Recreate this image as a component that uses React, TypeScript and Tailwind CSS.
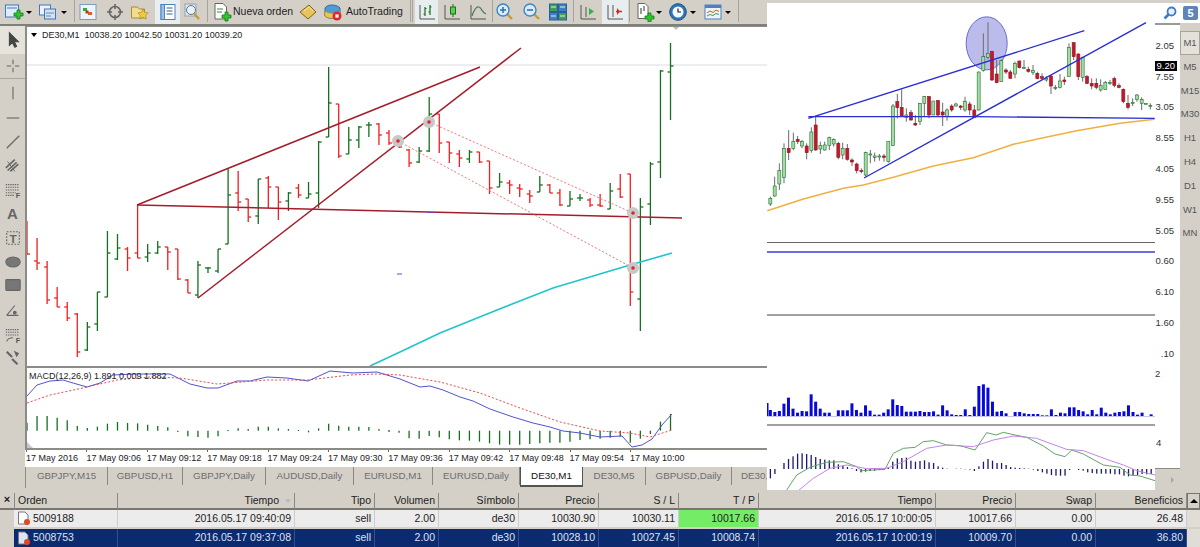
import React from 'react';

// main chart bars in page px: [high, low, open, close]
const bars: number[][] = [
  [221, 255, 221, 254], [238, 270, 261, 263], [261, 304, 267, 300], [287, 307, 298, 307], [302, 321, 307, 318],
  [313, 357, 314, 352], [322, 351, 350, 327], [292, 331, 324, 292], [231, 297, 297, 253], [234, 260, 259, 248],
  [247, 271, 249, 258], [205, 258, 253, 258], [244, 262, 257, 253], [241, 254, 253, 247], [247, 270, 247, 252],
  [249, 280, 249, 279], [279, 293, 280, 293], [261, 298, 295, 265], [267, 273, 268, 268], [249, 273, 271, 249],
  [169, 244, 244, 195], [171, 211, 193, 202], [199, 222, 199, 217], [179, 224, 216, 179], [176, 208, 178, 187],
  [187, 220, 187, 202], [192, 211, 201, 193], [184, 198, 188, 195], [182, 198, 198, 194], [141, 208, 193, 142],
  [67, 137, 137, 103], [104, 158, 104, 156], [127, 154, 154, 140], [126, 148, 140, 127], [122, 137, 125, 125],
  [123, 145, 124, 135], [130, 145, 133, 143], [140, 148, 141, 147], [149, 167, 150, 163], [147, 163, 162, 151],
  [97, 152, 151, 114], [114, 153, 114, 143], [142, 163, 142, 153], [150, 167, 154, 158], [150, 163, 159, 152],
  [152, 163, 152, 162], [161, 194, 161, 188], [173, 187, 187, 182], [180, 194, 183, 185], [184, 197, 188, 189],
  [190, 203, 194, 196], [176, 192, 192, 185], [184, 193, 185, 193], [189, 206, 193, 205], [191, 206, 206, 199],
  [194, 201, 198, 198], [198, 207, 200, 205], [194, 207, 205, 206], [183, 209, 209, 191], [174, 198, 189, 197],
  [174, 306, 174, 292], [198, 331, 299, 207], [162, 225, 204, 164], [70, 178, 162, 71], [43, 120, 72, 66],
];

const macd = '27,396 37,385 50,381 63,380 73,383 87,387 100,383 113,375 133,374 157,374 170,374 190,384 207,388 218,388 237,381 250,381 267,377 287,378 308,381 330,371 353,373 377,372 400,379 420,387 430,386 443,390 460,397 473,401 490,409 513,417 533,423 550,427 563,431 580,433 600,437 622,436 632,447 642,445 652,439 662,425 672,414';
const signal = '27,403 50,395 83,388 117,380 150,377 180,378 217,384 267,380 308,380 350,375 377,374 400,375 440,382 480,393 520,408 560,422 600,431 630,433 650,437 672,430';
// histogram as offset from the zero line, in 3x crop px (top, bottom)
const hist: number[][] = [
  [188, 212], [168, 212], [168, 212], [173, 212], [181, 212], [198, 212], [204, 212], [200, 212], [191, 212], [186, 212],
  [189, 212], [190, 212], [194, 212], [198, 212], [202, 212], [212, 216], [212, 229], [212, 231], [212, 233], [212, 229],
  [210, 213], [205, 212], [207, 212], [200, 212], [200, 212], [205, 212], [207, 212], [210, 213], [212, 217], [205, 212],
  [191, 212], [197, 212], [200, 212], [200, 212], [201, 212], [207, 212], [210, 216], [212, 218], [212, 235], [212, 236],
  [212, 228], [212, 232], [212, 238], [212, 241], [212, 242], [212, 245], [212, 250], [212, 254], [212, 254], [212, 254],
  [212, 252], [212, 250], [212, 248], [212, 248], [212, 245], [212, 240], [212, 238], [212, 236], [212, 233], [212, 230],
  [212, 248], [212, 236], [212, 222], [185, 212], [162, 212],
];

// right hand chart, 3x crop px: [x, high, low, bodyTop, bodyBottom, up]
const candles: [number, number, number, number, number, number][] = [
  [31, 590, 618, 595, 612, 1], [44, 530, 590, 558, 588, 1], [58, 490, 570, 512, 552, 1], [72, 430, 550, 445, 532, 1],
  [86, 390, 480, 445, 458, 0], [100, 398, 450, 425, 445, 1], [113, 408, 432, 418, 425, 0], [126, 420, 445, 425, 438, 1],
  [140, 430, 478, 438, 458, 0], [154, 382, 458, 396, 452, 1], [167, 350, 452, 375, 450, 0], [181, 425, 462, 437, 447, 1],
  [194, 425, 452, 435, 450, 1], [208, 410, 450, 412, 437, 1], [221, 415, 440, 418, 432, 1], [235, 425, 478, 430, 472, 0],
  [248, 428, 478, 445, 465, 1], [262, 432, 482, 445, 478, 0], [276, 475, 498, 480, 486, 0], [290, 488, 520, 492, 512, 0],
  [304, 505, 520, 512, 515, 0], [317, 455, 530, 458, 525, 1], [331, 450, 490, 462, 465, 1], [344, 458, 485, 468, 472, 1],
  [358, 462, 482, 468, 470, 1], [372, 462, 485, 468, 472, 0], [385, 425, 488, 425, 485, 1], [399, 312, 438, 318, 436, 1],
  [412, 282, 355, 305, 323, 0], [425, 268, 350, 322, 350, 0], [439, 325, 365, 345, 352, 1], [453, 330, 362, 338, 360, 0],
  [466, 345, 378, 370, 375, 0], [480, 310, 375, 310, 365, 1], [493, 288, 350, 290, 310, 1], [507, 288, 355, 290, 345, 0],
  [520, 303, 345, 303, 345, 1], [534, 300, 350, 302, 345, 0], [548, 308, 378, 336, 345, 0], [561, 325, 362, 330, 350, 1],
  [575, 313, 335, 318, 330, 0], [588, 308, 320, 312, 318, 1], [602, 315, 330, 318, 322, 0], [615, 290, 335, 305, 330, 1],
  [629, 305, 345, 312, 330, 0], [643, 315, 352, 330, 352, 0], [656, 215, 332, 216, 330, 1], [670, 100, 215, 170, 212, 1],
  [684, 67, 178, 160, 172, 1], [696, 152, 243, 155, 240, 0], [710, 180, 250, 222, 248, 0], [724, 178, 245, 182, 245, 1],
  [738, 205, 222, 210, 216, 0], [751, 210, 235, 216, 235, 0], [765, 185, 235, 190, 222, 1], [778, 182, 205, 183, 203, 0],
  [792, 180, 205, 203, 204, 1], [805, 200, 218, 208, 214, 0], [819, 195, 225, 212, 218, 1], [832, 215, 238, 220, 236, 0],
  [846, 220, 240, 230, 235, 0], [859, 228, 245, 235, 240, 1], [873, 225, 282, 228, 258, 0], [886, 255, 270, 262, 265, 1],
  [900, 222, 265, 243, 262, 1], [913, 230, 255, 240, 245, 0], [927, 130, 230, 142, 230, 1], [941, 127, 180, 128, 170, 0],
  [955, 160, 240, 162, 230, 0], [968, 170, 245, 172, 232, 1], [981, 225, 252, 230, 250, 0], [995, 235, 268, 250, 258, 0],
  [1009, 235, 268, 250, 262, 0], [1022, 238, 275, 256, 270, 1], [1036, 243, 270, 248, 268, 1], [1050, 240, 255, 248, 250, 1],
  [1063, 230, 262, 236, 256, 0], [1077, 250, 265, 257, 262, 0], [1090, 265, 310, 268, 305, 0], [1104, 285, 328, 310, 322, 0],
  [1118, 295, 318, 308, 311, 1], [1131, 282, 305, 285, 298, 1], [1145, 292, 330, 298, 310, 1], [1158, 310, 312, 310, 312, 1],
  [1171, 310, 328, 316, 318, 1],
];
const volumes = [18, 12, 15, 37, 55, 22, 10, 15, 14, 65, 43, 22, 10, 10, 0, 17, 17, 17, 38, 18, 10, 32, 16, 4, 4, 10, 20, 50, 33, 30, 13, 13, 13, 15, 12, 12, 14, 4, 32, 17, 5, 3, 3, 20, 3, 28, 90, 95, 85, 43, 13, 15, 8, 0, 12, 12, 8, 6, 6, 6, 2, 2, 20, 3, 10, 8, 26, 26, 18, 14, 5, 18, 5, 25, 10, 5, 10, 12, 14, 32, 12, 4, 10, 0, 5];
const macdRight = [-28, -15, 0, 18, 30, 38, 46, 47, 45, 42, 36, 30, 28, 26, 26, 14, 10, 6, 2, -6, -10, -8, -6, -5, -3, -2, 5, 22, 32, 33, 34, 25, 22, 24, 26, 20, 18, 8, 4, 1, 0, 1, 1, -1, -2, -6, 8, 22, 30, 25, 18, 18, 12, 6, 4, 3, 2, 1, -2, -6, -10, -14, -18, -20, -20, -20, -3, 0, -3, -5, -10, -12, -14, -14, -14, -14, -16, -16, -20, -22, -20, -18, -15, -16, -15];

const RX = (z: number) => 760 + z / 3;
const RY = (z: number) => z / 3;
// lower half of the right chart was read from a crop that starts at y=230
const LY = (z: number) => 230 + z / 3;
const crop = (s: string, fy: (z: number) => number = RY) =>
  s.split(' ').map((p) => { const [x, y] = p.split(',').map(Number); return `${RX(x)},${fy(y)}`; }).join(' ');

const TABS = [
  ['GBPJPY,M15', 'w-[82px]'], ['GBPUSD,H1', 'w-[75px]'], ['GBPJPY,Daily', 'w-[83px]'], ['AUDUSD,Daily', 'w-[88px]'],
  ['EURUSD,M1', 'w-[79px]'], ['EURUSD,Daily', 'w-[87px]'],
];
const TABS2 = [['DE30,M5', 'w-[63px]'], ['GBPUSD,Daily', 'w-[86px]']];
const TIMES = ['17 May 2016', '17 May 09:06', '17 May 09:12', '17 May 09:18', '17 May 09:24', '17 May 09:30', '17 May 09:36', '17 May 09:42', '17 May 09:48', '17 May 09:54', '17 May 10:00'];
const PRICES = ['2.05', '7.55', '3.05', '8.55', '4.05', '9.55', '5.05', '0.60', '6.10', '1.60', '.10'];
const FRAMES = ['M1', 'M5', 'M15', 'M30', 'H1', 'H4', 'D1', 'W1', 'MN'];

const GRID = 'grid grid-cols-[14px_104px_177px_80px_64px_80px_80px_80px_80px_177px_80px_80px_91px_13px]';

const Caret = ({ className }: { className: string }) => (
  <div className={`flex h-[24px] items-center justify-center ${className}`}>
    <span className="border-x-[3px] border-t-[3px] border-x-transparent border-t-black" />
  </div>
);
const Sep = ({ className }: { className: string }) => <div className={`h-[22px] w-px bg-[#a8a49a] ${className}`} />;
const Btn = ({ className, children }: { className: string; children: React.ReactNode }) => (
  <div className={`flex h-[24px] items-center justify-center ${className}`}>
    <svg viewBox="0 0 20 20" className="h-[20px] w-[20px]">{children}</svg>
  </div>
);
const Plus = ({ x = 0, y = 0 }: { x?: number; y?: number }) => (
  <path transform={`translate(${x} ${y})`} d="M11 10h3V7h3v3h3v3h-3v3h-3v-3h-3z" fill="#2fc52f" stroke="#137a13" strokeWidth="0.8" />
);
const Tool = ({ className, children }: { className: string; children: React.ReactNode }) => (
  <div className={`flex w-[25px] items-center justify-center ${className}`}>
    <svg viewBox="0 0 20 20" className="h-[18px] w-[18px]" fill="none" stroke="#666" strokeWidth="1.2">{children}</svg>
  </div>
);

function Toolbar() {
  return (
    <div className="flex h-[26px] shrink-0 items-start border-b-2 border-[#80807a]">
      <Btn className="ml-[3px] w-[21px]">
        <rect x="1.5" y="3" width="13" height="12" fill="#dfeeff" stroke="#3f78bd" />
        <path d="M3 6h10" stroke="#3f78bd" />
        <Plus x="-1" y="1" />
      </Btn>
      <Caret className="w-[10px]" />
      <Btn className="ml-[4px] w-[20px]">
        <rect x="1.5" y="3" width="11" height="10" fill="#eaf3ff" stroke="#3f78bd" />
        <rect x="6.5" y="7" width="11" height="10" fill="#cfe2fa" stroke="#3f78bd" />
        <path d="M8 11h8M8 14h5" stroke="#888" />
      </Btn>
      <Caret className="w-[12px]" />
      <Sep className="ml-[4px]" />
      <Btn className="ml-[3px] w-[20px]">
        <rect x="2" y="2.5" width="16" height="15" fill="#eef4fb" stroke="#7b9cc2" />
        <rect x="5" y="6" width="4" height="3" fill="#36a64a" />
        <rect x="10" y="10" width="4" height="3" fill="#d9622b" />
        <rect x="7.5" y="8.5" width="3" height="3" fill="#b7382a" />
      </Btn>
      <Btn className="ml-[7px] w-[20px]">
        <circle cx="10" cy="10" r="5.5" fill="none" stroke="#666" strokeWidth="1.6" />
        <path d="M10 2v5M10 13v5M2 10h5M13 10h5" stroke="#666" strokeWidth="1.6" />
      </Btn>
      <Btn className="ml-[5px] w-[20px]">
        <path d="M1.5 5h6l2 2h5v9h-13z" fill="#f2dc8e" stroke="#a68a34" />
        <path d="M13 7l1.7 3.4 3.6.5-2.6 2.5.6 3.6-3.3-1.7-3.2 1.7.6-3.6-2.6-2.5 3.6-.5z" fill="#f3c93f" stroke="#a68a34" strokeWidth="0.7" />
      </Btn>
      <div className="ml-[5px] h-[24px] w-[25px] bg-[#e8eef0]">
        <Btn className="w-[25px]">
          <rect x="3" y="2.5" width="14" height="15" fill="#fff" stroke="#4c82bf" />
          <rect x="3" y="2.5" width="3.5" height="15" fill="#9cc1e8" stroke="#4c82bf" />
          <path d="M8.5 6h6M8.5 9h6M8.5 12h6" stroke="#3c5a80" />
        </Btn>
      </div>
      <Btn className="ml-[2px] w-[20px]">
        <rect x="3" y="2" width="11" height="12" fill="#dfe7ef" stroke="#8fa3b8" />
        <circle cx="9" cy="8" r="4.5" fill="#eaf2fa" stroke="#5c7792" />
        <path d="M12 11.5l5 5.5" stroke="#c99a2e" strokeWidth="2.2" />
      </Btn>
      <Sep className="ml-[5px]" />
      <Btn className="ml-[4px] w-[20px]">
        <path d="M3 1.5h8l3.5 3.5v12h-11.500z" fill="#fff" stroke="#666" />
        <path d="M5 7h6M5 10h5" stroke="#4b7f4b" />
        <Plus x="-1" y="3" />
      </Btn>
      <span className="ml-px w-[60px] whitespace-nowrap pt-[3px] text-[10.500px] leading-[16px] text-[#222]">Nueva orden</span>
      <Btn className="ml-[5px] w-[20px]">
        <path d="M2 10L11 3l7 7-8 7z" fill="#e8c25a" stroke="#7a6420" />
        <path d="M6 9l5-4 4 4" fill="none" stroke="#f7e6a8" />
      </Btn>
      <Btn className="ml-[5px] w-[20px]">
        <path d="M2 6c2-4 12-4 15 0v8c-3 3-13 3-15 0z" fill="#4f9bd6" stroke="#356a9c" />
        <path d="M2 9c4 3 11 3 15 0v5c-3 3-13 3-15 0z" fill="#f0c648" stroke="#a8862a" strokeWidth="0.6" />
        <circle cx="14" cy="14" r="4.500" fill="#e3262b" />
        <rect x="12.400" y="12.400" width="3.200" height="3.200" fill="#fff" />
      </Btn>
      <span className="ml-[3px] w-[58px] whitespace-nowrap pt-[3px] text-[10.500px] leading-[16px] text-[#222]">AutoTrading</span>
      <div className="ml-[6px] h-[22px] w-[3px] border-x border-[#a8a49a]" />
      <div className="ml-[2px] h-[24px] w-[23px] bg-[#e8eef0]">
        <Btn className="w-[23px]">
          <path d="M3 3v14h15" fill="none" stroke="#555" />
          <path d="M8 5v9M6.500 12H8M8 6.500h1.500M13 3v10M11.500 10H13M13 5h1.500" stroke="#16701f" strokeWidth="1.2" fill="none" />
        </Btn>
      </div>
      <Btn className="ml-[4px] w-[20px]">
        <path d="M3 3v14h15" fill="none" stroke="#555" />
        <path d="M11 2v13" stroke="#16701f" />
        <rect x="8.500" y="5" width="5" height="7" fill="#56d24c" stroke="#16701f" />
      </Btn>
      <Btn className="ml-[6px] w-[20px]">
        <path d="M3 3v14h15" fill="none" stroke="#555" />
        <path d="M4 14c2-6 4-10 7-9 3 1 3 6 7 7" fill="none" stroke="#4a7f5a" strokeWidth="1.2" />
      </Btn>
      <Sep className="ml-[4px]" />
      <Btn className="ml-[2px] w-[20px]">
        <path d="M12 12l5 5" stroke="#c99a2e" strokeWidth="2.400" />
        <circle cx="8" cy="8" r="6" fill="#d9ecfb" stroke="#3e85c7" strokeWidth="1.400" />
        <path d="M5 8h6M8 5v6" stroke="#2a6fb0" strokeWidth="1.500" />
      </Btn>
      <Btn className="ml-[7px] w-[20px]">
        <path d="M12 12l5 5" stroke="#c99a2e" strokeWidth="2.400" />
        <circle cx="8" cy="8" r="6" fill="#d9ecfb" stroke="#3e85c7" strokeWidth="1.400" />
        <path d="M5 8h6" stroke="#2a6fb0" strokeWidth="1.500" />
      </Btn>
      <Btn className="ml-[6px] w-[20px]">
        <rect x="1.500" y="2" width="8" height="7.500" fill="#3f9e55" stroke="#2a5e9a" />
        <rect x="10.500" y="2" width="8" height="7.500" fill="#3f7fc4" stroke="#2a5e9a" />
        <rect x="1.500" y="10.500" width="8" height="7.500" fill="#3f7fc4" stroke="#2a5e9a" />
        <rect x="10.500" y="10.500" width="8" height="7.500" fill="#3f9e55" stroke="#2a5e9a" />
        <path d="M3 5h5M12 5h5M3 14h5M12 14h5" stroke="#e8f2e8" />
      </Btn>
      <Sep className="ml-[5px]" />
      <Btn className="ml-[4px] w-[20px]">
        <path d="M3 3v14h15" fill="none" stroke="#555" />
        <path d="M8 5v10" stroke="#555" />
        <path d="M11 6l5 3.500-5 3.500z" fill="#37b24a" />
      </Btn>
      <div className="ml-[4px] h-[24px] w-[26px] bg-[#e8eef0]">
        <Btn className="w-[26px]">
          <path d="M3 3v14h15M8 3v12" fill="none" stroke="#555" />
          <path d="M11 9.500h6" stroke="#d02a2a" strokeWidth="1.500" />
          <path d="M12 6l3 3.500-3 3.500z" fill="#d02a2a" />
        </Btn>
      </div>
      <Sep className="ml-px" />
      <Btn className="ml-[5px] w-[20px]">
        <path d="M3 1.500h7l3 3v12h-10z" fill="#fff" stroke="#666" />
        <path d="M6 6v6M9 4v5" stroke="#333" />
        <Plus x="-1" y="4" />
      </Btn>
      <Caret className="w-[8px]" />
      <Btn className="ml-[5px] w-[20px]">
        <circle cx="10" cy="10" r="8.300" fill="#2d74b8" stroke="#1c507f" />
        <circle cx="10" cy="10" r="5.500" fill="#f4f8fb" />
        <path d="M10 6.500V10h3" stroke="#222" fill="none" strokeWidth="1.200" />
      </Btn>
      <Caret className="w-[9px]" />
      <Btn className="ml-[6px] w-[20px]">
        <rect x="2" y="3" width="16" height="14" fill="#eef3f8" stroke="#4c82bf" />
        <rect x="2" y="3" width="16" height="3" fill="#4c82bf" />
        <path d="M4 11l3-2 3 1.500 3-2.500 3 1.500" fill="none" stroke="#d0542a" />
        <path d="M4 14l3-1.500 3 1 3-2 3 1" fill="none" stroke="#37a048" />
      </Btn>
      <Caret className="w-[10px]" />
      <Sep className="ml-[5px]" />
    </div>
  );
}

function SideTools() {
  return (
    <div className="flex w-[25px] shrink-0 flex-col">
      <Tool className="h-[28px] bg-[#e6e3dc]">
        <path d="M6 2l0 14 3.500-3 2.500 5 2-1-2.500-5h4.500z" fill="#444" stroke="#444" />
      </Tool>
      <Tool className="h-[25px] border-b border-[#aaa69c]">
        <path d="M10 3v5M10 12v5M3 10h5M12 10h5" />
      </Tool>
      <Tool className="h-[27px]"><path d="M10 3v14" /></Tool>
      <Tool className="h-[24px]"><path d="M3 10h14" /></Tool>
      <Tool className="h-[24px]"><path d="M3 17L17 3" strokeWidth="1.400" /></Tool>
      <Tool className="h-[24px]">
        <path d="M2 12L12 3M4 15L14 6M7 16L16 8" strokeWidth="1.800" />
        <path d="M4 5l8 11" strokeWidth="1" />
      </Tool>
      <Tool className="h-[24px]">
        <path d="M2 4h15M2 7h15M2 10h15M2 13h11M2 16h9" strokeDasharray="1.500 1" />
        <text x="13" y="19" fontSize="8" fontWeight="700" fill="#555" stroke="none">F</text>
      </Tool>
      <div className="flex h-[24px] w-[25px] items-center justify-center text-[15px] font-bold text-[#666]">A</div>
      <Tool className="h-[24px]">
        <rect x="3" y="3" width="14" height="14" strokeDasharray="2 1.500" />
        <text x="6" y="15" fontSize="13" fontWeight="700" fill="#666" stroke="none">T</text>
      </Tool>
      <Tool className="h-[23px]"><ellipse cx="10" cy="10" rx="8" ry="5.500" fill="#777" /></Tool>
      <Tool className="h-[24px]"><rect x="2" y="4" width="16" height="12" rx="1" fill="#777" /></Tool>
      <Tool className="h-[25px]">
        <path d="M3 16L12 5M3 16h13" />
        <circle cx="12" cy="13" r="1.500" fill="#666" />
      </Tool>
      <Tool className="h-[25px]">
        <path d="M2 4h15M2 7h15M2 10h15" strokeDasharray="1.500 1" />
        <path d="M3 17c1-3 3-4 7-4" />
        <text x="13" y="19" fontSize="8" fontWeight="700" fill="#555" stroke="none">F</text>
      </Tool>
      <Tool className="h-[21px]">
        <path d="M3 3l6 6M9 11l6 6" strokeWidth="2.400" />
        <path d="M12 3l4 2-2 3z" fill="#666" />
      </Tool>
    </div>
  );
}

function MainChart() {
  return (
    <div className="relative h-[340px] shrink-0 border-l-2 border-t border-[#8c8c86] bg-white">
      <svg viewBox="27 27 740 339" className="block h-[339px] w-[740px]">
        <line x1="27" x2="767" y1="65" y2="65" stroke="#dcdcdc" />
        {bars.map(([h, l, o, c], i) => {
          const x = 27 + i * 10.055;
          const col = c <= o ? '#15701f' : '#f01f1f';
          return (
            <g key={i} stroke={col} strokeWidth="1.300" fill="none">
              <line x1={x} x2={x} y1={h} y2={l} />
              <line x1={x - 3} x2={x} y1={o} y2={o} />
              <line x1={x} x2={x + 3} y1={c} y2={c} />
            </g>
          );
        })}
        <g stroke="#a31d2b" strokeWidth="1.500">
          <line x1="137" y1="205" x2="480" y2="67" />
          <line x1="198" y1="298" x2="521" y2="48" />
          <line x1="137" y1="205" x2="682" y2="218" />
        </g>
        <g stroke="#ee7676" strokeDasharray="2 2">
          <line x1="398" y1="141" x2="633" y2="268" />
          <line x1="429" y1="122" x2="633" y2="213" />
        </g>
        <polyline points="370,366 400,352 440,333 497,310 553,288 630,265 672,253" fill="none" stroke="#20c4cc" strokeWidth="1.600" />
        {[[398, 141], [429, 122], [633, 213], [633, 268]].map(([x, y]) => (
          <g key={x + y}>
            <circle cx={x} cy={y} r="6" fill="#c8c8c8" />
            <circle cx={x} cy={y} r="1.800" fill="#e0242c" />
          </g>
        ))}
        <g stroke="#5a4ad0">
          <line x1="428" x2="433" y1="212.500" y2="212.500" />
          <line x1="397" x2="402" y1="274" y2="274" />
        </g>
        <path d="M672 26l4 4 4-4z" fill="#bdbdbd" />
      </svg>
      <div className="absolute left-[4px] top-[1px] flex items-center text-[9px] leading-[14px] text-[#222]">
        <span className="mr-[5px] border-x-[3px] border-t-[4px] border-x-transparent border-t-black" />
        <span className="whitespace-pre">DE30,M1  10038.20 10042.50 10031.20 10039.20</span>
      </div>
    </div>
  );
}

function MacdPanel() {
  return (
    <div className="relative h-[84px] shrink-0 border-y-2 border-l-2 border-y-[#8c8c86] border-l-[#8c8c86] bg-white">
      <svg viewBox="27 368 740 80" className="block h-[80px] w-[740px]">
        {hist.map(([t, b], i) => {
          const x = 27 + i * 10.055;
          return <line key={i} x1={x} x2={x} y1={360 + t / 3} y2={360 + b / 3} stroke="#15701f" strokeWidth="1.300" />;
        })}
        <polyline points={macd} fill="none" stroke="#5252d0" strokeWidth="1" />
        <polyline points={signal} fill="none" stroke="#e8484c" strokeDasharray="2 2" strokeWidth="1" />
        <path d="M27 442v6h6z" fill="#c8c8c8" />
      </svg>
      <div className="absolute left-[2px] top-[1px] whitespace-pre text-[9px] leading-[14px] text-[#222]">MACD(12,26,9) 1.891 0.009 1.882</div>
    </div>
  );
}

function TimeAxis() {
  return (
    <div className="flex h-[17px] shrink-0 bg-white pl-px text-[9px] leading-[13px] text-[#222]">
      {TIMES.map((t) => (
        <div key={t} className="w-[60.400px] shrink-0 whitespace-nowrap">
          <span className="block h-[2px] w-px bg-[#666]" />
          {t}
        </div>
      ))}
    </div>
  );
}

function Tabs() {
  return (
    <div className="flex h-[21px] shrink-0 overflow-hidden border-l border-[#8c8c86] text-[9.800px] leading-[18px] text-[#6e6e6e]">
      {TABS.map(([t, w]) => (
        <div key={t} className={`${w} flex h-[18px] shrink-0 items-center justify-center whitespace-nowrap border-r border-[#8c8880]`}>{t}</div>
      ))}
      <div className="flex h-[20px] w-[63px] shrink-0 items-center justify-center border-x border-b-2 border-[#55554f] bg-white text-[#111]">DE30,M1</div>
      {TABS2.map(([t, w], i) => (
        <div key={i} className={`${w} flex h-[18px] shrink-0 items-center justify-center whitespace-nowrap border-r border-[#8c8880]`}>{t}</div>
      ))}
      <div className="flex h-[18px] items-center whitespace-nowrap pl-[9px]">DE30,</div>
    </div>
  );
}

function RightChart() {
  const base = 558;
  const zero = 717;
  return (
    <svg viewBox="767 3 388 487" className="block h-[487px] w-[388px] shrink-0 bg-white">
      <polyline points={crop('22,632 130,597 250,565 310,555 400,532 520,498 640,473 760,433 850,413 950,392 1080,370 1184,358')} fill="none" stroke="#f0b040" strokeWidth="1.500" />
      <ellipse cx={RX(680)} cy={RY(130)} rx="20.500" ry="26.500" fill="#bcbcec" stroke="#6a6ad6" />
      {candles.map(([x, h, l, t, b, up]) => (
        <g key={x}>
          <line x1={RX(x)} x2={RX(x)} y1={RY(h)} y2={RY(l)} stroke="#6a6a6a" />
          <rect x={RX(x) - 1.500} y={RY(t)} width="3" height={Math.max(RY(b) - RY(t), 1)} fill={up ? '#a4dca6' : '#c4182c'} stroke={up ? '#1f6f2c' : '#8e1220'} strokeWidth="0.600" />
        </g>
      ))}
      <g stroke="#2a2ed2" strokeWidth="1.400" fill="none">
        <line x1={RX(145)} y1={RY(355)} x2={RX(973)} y2={RY(92)} />
        <line x1={RX(312)} y1={RY(534)} x2={RX(1158)} y2={RY(68)} />
        <polyline points={crop('145,350 640,350 1184,355')} />
      </g>
      <line x1="767" x2="1155" y1="242.500" y2="242.500" stroke="#666" />
      <line x1="767" x2="1155" y1="252" y2="252" stroke="#3a3ed4" strokeWidth="1.600" />
      <line x1="767" x2="1155" y1="315" y2="315" stroke="#a0a0a0" strokeWidth="2" />
      <line x1="767" x2="1155" y1="425" y2="425" stroke="#a0a0a0" strokeWidth="2" />
      <rect x="767" y="403" width="1.500" height="13" fill="#0808d8" />
      {volumes.map((v, i) => (
        <rect key={i} x={RX(31 + i * 13.6) - 1.500} y={LY(base - v)} width="3" height={v / 3} fill="#0808d8" />
      ))}
      <line x1="767" x2="1155" y1={LY(base) + 0.500} y2={LY(base) + 0.500} stroke="#c8c8e8" />
      {macdRight.map((v, i) => (
        <rect key={i} x={RX(31 + i * 13.6) - 0.600} y={LY(v > 0 ? zero - v : zero)} width="1.300" height={Math.abs(v) / 3} fill="#1a1a70" />
      ))}
      <polyline points={crop('80,780 110,735 150,712 200,697 250,695 290,710 305,722 375,718 400,670 430,655 465,652 490,635 520,632 560,645 600,647 645,660 680,608 708,615 730,607 765,615 800,622 850,648 885,672 915,680 935,660 970,672 1030,705 1080,712 1110,735 1140,738 1185,752', LY)} fill="none" stroke="#62a468" />
      <polyline points={crop('115,782 160,745 210,715 260,705 320,716 380,715 430,695 500,655 560,645 640,650 700,630 760,618 830,625 870,640 920,658 970,662 1040,688 1090,705 1130,722 1185,735', LY)} fill="none" stroke="#c484e4" />
    </svg>
  );
}

function RightColumn() {
  return (
    <div className="flex w-[45px] shrink-0 flex-col bg-white">
      <div className="flex h-[20px] shrink-0 items-center justify-end gap-[6px] pr-[2px]">
        <svg viewBox="0 0 14 14" className="h-[14px] w-[14px]">
          <circle cx="8.500" cy="5.500" r="4" fill="#e8f2fc" stroke="#3c7cc4" strokeWidth="1.800" />
          <path d="M5.500 8.500L1.500 12.500" stroke="#3c7cc4" strokeWidth="2.600" />
        </svg>
        <div className="flex h-[14px] w-[15px] items-center justify-center rounded-[2px] bg-[#5d85bb] text-[11px] font-bold leading-none text-white">5</div>
      </div>
      <div className="flex min-h-0 flex-1">
        <div className="relative flex w-[25px] shrink-0 flex-col border-t-2 border-[#9a9a94] pt-[5.600px] text-[9.500px] text-[#333]">
          {PRICES.map((p) => (
            <div key={p} className="flex h-[30.800px] shrink-0 items-center justify-end pr-[6px]">{p}</div>
          ))}
          <div className="flex h-[9px] shrink-0 items-center justify-start leading-[9px]">2</div>
          <div className="mt-[55px] flex h-[20px] shrink-0 items-center justify-start pl-[1px]">4</div>
          <div className="mt-auto flex h-[22px] items-center justify-end border-t border-[#8c8c86] bg-[#d4d0c8] pr-[6px]">
            <span className="border-y-[3px] border-l-[3px] border-y-transparent border-l-[#aaa69e]" />
          </div>
          <div className="absolute left-0 top-[36px] flex h-[10px] w-[22px] items-center justify-end bg-black pr-[2px] text-[9.500px] text-white">9.20</div>
        </div>
        <div className="flex w-[20px] shrink-0 flex-col overflow-hidden bg-[#d4d0c8] pt-[8px] text-[9.500px] text-[#555]">
          {FRAMES.map((f, i) => (
            <div key={f} className={i === 0 ? 'flex h-[24px] shrink-0 items-center justify-center border border-[#a8a49a] bg-[#e4e1da]' : 'flex h-[23.800px] shrink-0 items-center justify-center whitespace-nowrap'}>{f}</div>
          ))}
        </div>
      </div>
    </div>
  );
}

function DocIcon({ selected }: { selected?: boolean }) {
  return (
    <svg viewBox="0 0 14 15" className="h-[15px] w-[14px] shrink-0">
      <path d="M1.500 1h6.500l3 3v9h-9.500z" fill={selected ? '#dde6f4' : '#fff'} stroke="#777" />
      <circle cx="10" cy="11" r="3" fill="#e2491f" />
    </svg>
  );
}

function Orders() {
  const cell = 'flex items-center justify-end border-r px-[2px] pr-[3px] whitespace-nowrap';
  const head = ['Tiempo', 'Tipo', 'Volumen', 'Símbolo', 'Precio', 'S / L', 'T / P', 'Tiempo', 'Precio', 'Swap', 'Beneficios'];
  const rows = [
    { id: '5009188', vals: ['2016.05.17 09:40:09', 'sell', '2.00', 'de30', '10030.90', '10030.11', '10017.66', '2016.05.17 10:00:05', '10017.66', '0.00', '26.48'] },
    { id: '5008753', vals: ['2016.05.17 09:37:08', 'sell', '2.00', 'de30', '10028.10', '10027.45', '10008.74', '2016.05.17 10:00:19', '10009.70', '0.00', '36.80'] },
  ];
  return (
    <div className="mt-[3px] text-[10.500px] text-[#222]">
      <div className={`${GRID} h-[17px] border-b-2 border-[#77776f] bg-[#d4d0c8]`}>
        <div className="flex items-start justify-center text-[11px] font-bold leading-[12px]">×</div>
        <div className="flex items-center border-x border-[#8c8880] pl-[3px]">Orden</div>
        {head.map((h, i) => (
          <div key={i} className={`${cell} border-[#8c8880]`}>
            {h}
            {i === 0 && <span className="ml-[6px] border-x-[3px] border-t-[4px] border-x-transparent border-t-[#bbb]" />}
          </div>
        ))}
        <div className="flex items-center justify-center border border-[#77776f]">
          <span className="border-x-[4px] border-b-[4px] border-x-transparent border-b-black" />
        </div>
      </div>
      {rows.map((r, ri) => {
        const sel = ri === 1;
        return (
          <div key={r.id} className={`${GRID} ${sel ? 'mt-[2px] h-[18px] text-[#dbe3f2]' : 'h-[17px]'}`}>
            <div className="bg-[#d4d0c8]" />
            <div className={`flex items-center gap-[2px] border-r pl-[3px] ${sel ? 'border-[#34508c] bg-[#0b2a70]' : 'border-[#ccc] bg-[#ececec]'}`}>
              <DocIcon selected={sel} />
              {r.id}
            </div>
            {r.vals.map((v, i) => (
              <div key={i} className={`${cell} ${sel ? 'border-[#34508c] bg-[#0b2a70]' : i === 6 ? 'border-[#ccc] bg-[#74ec66]' : 'border-[#ccc] bg-[#ececec]'}`}>{v}</div>
            ))}
            <div className="bg-[#e0ddd6]" />
          </div>
        );
      })}
    </div>
  );
}

export default function App() {
  return (
    <div className="h-[547px] w-[1200px] overflow-hidden bg-[#d4d0c8] font-['Liberation_Sans',sans-serif]">
      <div className="flex h-[490px]">
        <div className="flex w-[767px] shrink-0 flex-col">
          <Toolbar />
          <div className="flex min-h-0 flex-1">
            <SideTools />
            <div className="flex min-w-0 flex-1 flex-col">
              <MainChart />
              <MacdPanel />
              <TimeAxis />
              <Tabs />
            </div>
          </div>
        </div>
        <div className="flex w-[433px] shrink-0 flex-col pt-[3px]">
          <div className="flex min-h-0 flex-1">
            <RightChart />
            <RightColumn />
          </div>
        </div>
      </div>
      <Orders />
    </div>
  );
}
